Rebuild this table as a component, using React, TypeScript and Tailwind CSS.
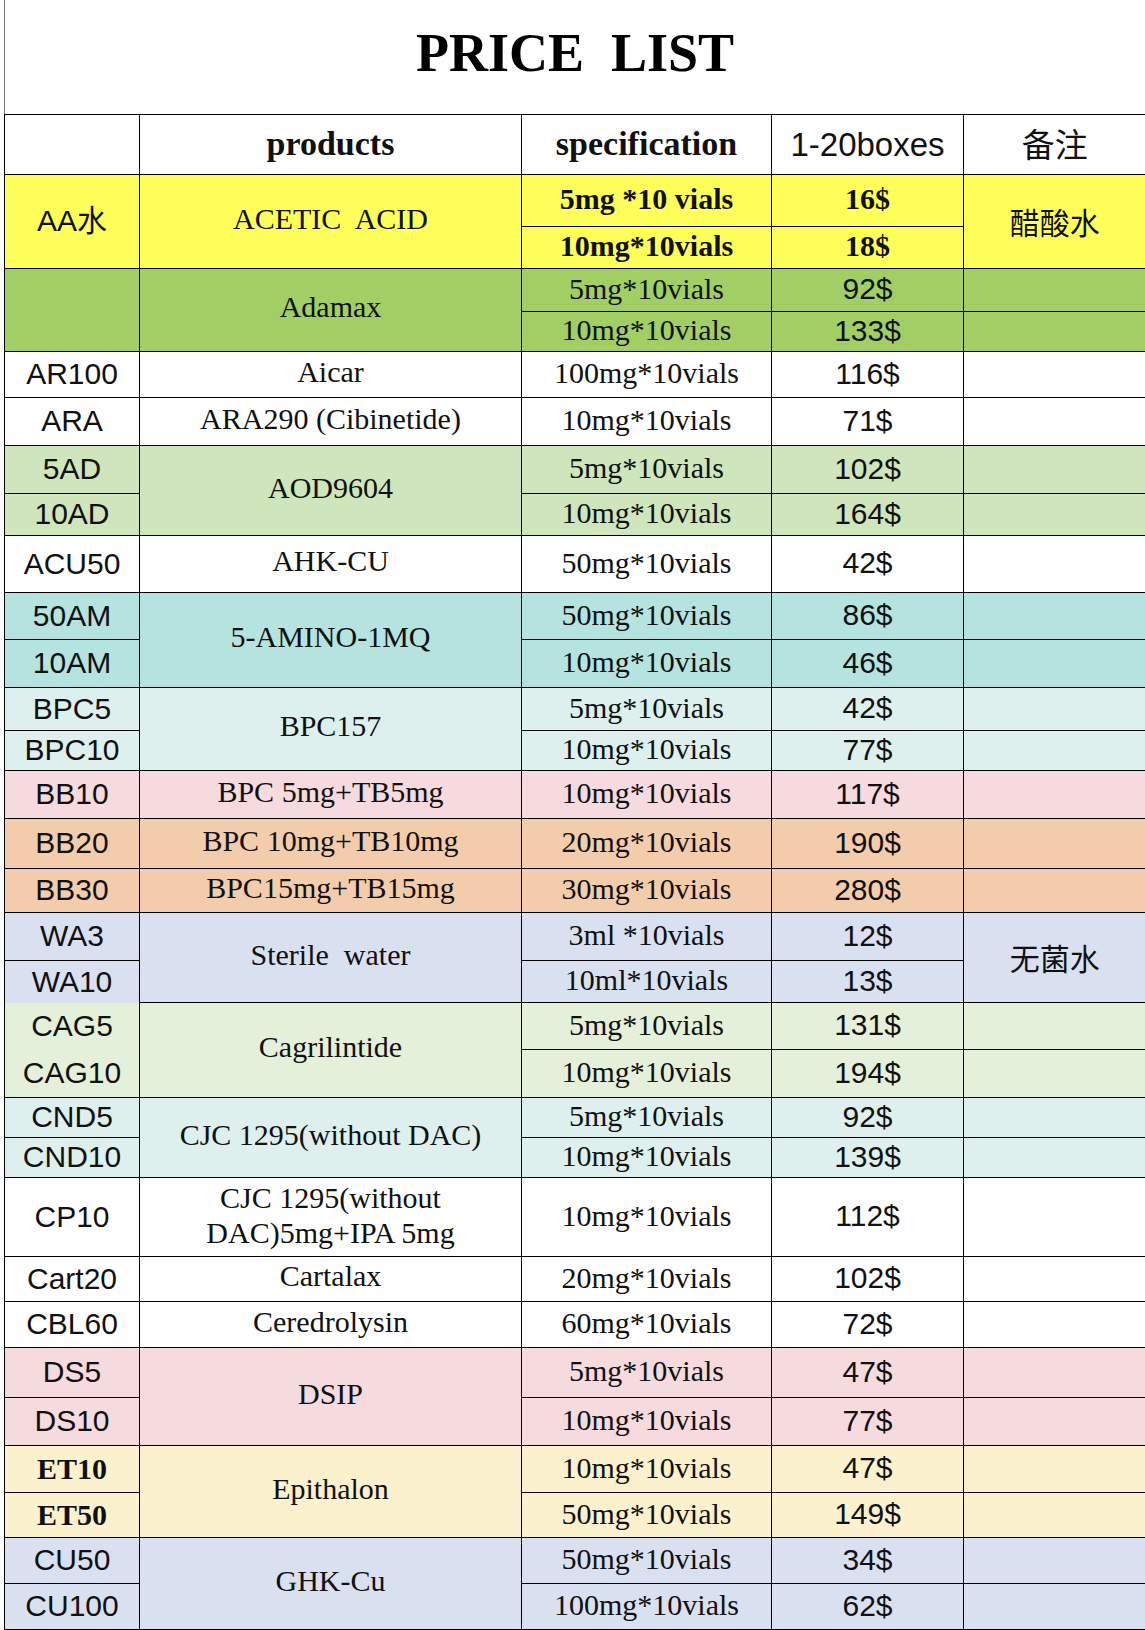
const serif = "font-['Liberation_Serif','Times_New_Roman',serif]";
const sans = "font-['Liberation_Sans','Noto_Sans_CJK_SC',sans-serif]";
const cjk = "font-['Noto_Sans_CJK_SC',sans-serif]";

type CellProps = {
  children?: React.ReactNode;
  className?: string;
  rowSpan?: number;
};

function Td({ children, className = "", rowSpan }: CellProps) {
  return (
    <td
      rowSpan={rowSpan}
      className={`border border-black p-0 text-center align-middle text-[30px] leading-[1.15] text-[#111] ${className}`}
    >
      {children}
    </td>
  );
}

// code column
function Code({ children, className = "", rowSpan }: CellProps) {
  return (
    <Td rowSpan={rowSpan} className={`${sans} ${className}`}>
      {children}
    </Td>
  );
}

function Name({ children, className = "", rowSpan }: CellProps) {
  return (
    <Td rowSpan={rowSpan} className={`${serif} pb-[5px] ${className}`}>
      {children}
    </Td>
  );
}

function Spec({ children, className = "" }: CellProps) {
  return <Td className={`${serif} pb-[2px] ${className}`}>{children}</Td>;
}

function Price({ children, className = "" }: CellProps) {
  return <Td className={`${sans} pb-[1px] ${className}`}>{children}</Td>;
}

function Note({ children, rowSpan }: CellProps) {
  return (
    <Td rowSpan={rowSpan} className={`${cjk} border-r-0`}>
      {children}
    </Td>
  );
}

export default function App() {
  return (
    <div className="w-[1145px] bg-white">
      <div className="ml-[4px] w-[1141px]">
        <div className="flex h-[114px] items-center justify-center border-l border-[#777] pb-[8px]">
          <h1 className={`${serif} whitespace-pre text-[54px] font-bold leading-none text-black`}>PRICE  LIST</h1>
        </div>
        <table className="w-[1141px] table-fixed border-collapse">
          <colgroup>
            <col className="w-[135px]" />
            <col className="w-[382px]" />
            <col className="w-[250px]" />
            <col className="w-[192px]" />
            <col className="w-[182px]" />
          </colgroup>
          <tbody>
            <tr className="h-[60px] bg-white">
              <Td />
              <Td className={`${serif} pb-[2px] text-[34px] font-bold`}>products</Td>
              <Td className={`${serif} pb-[2px] text-[34px] font-bold`}>specification</Td>
              <Td className={`${sans} text-[33px]`}>1-20boxes</Td>
              <Td className={`${cjk} border-r-0 pb-[2px] text-[33px]`}>备注</Td>
            </tr>

            <tr className="h-[52px] bg-[#ffff5c]">
              <Code rowSpan={2}>AA水</Code>
              <Name rowSpan={2} className="whitespace-pre">ACETIC  ACID</Name>
              <Spec className="font-bold">5mg *10 vials</Spec>
              <Spec className="font-bold">16$</Spec>
              <Note rowSpan={2}>醋酸水</Note>
            </tr>
            <tr className="h-[42px] bg-[#ffff5c]">
              <Spec className="font-bold">10mg*10vials</Spec>
              <Spec className="font-bold">18$</Spec>
            </tr>

            <tr className="h-[43px] bg-[#a1cf66]">
              <Code rowSpan={2} />
              <Name rowSpan={2}>Adamax</Name>
              <Spec>5mg*10vials</Spec>
              <Price>92$</Price>
              <Note />
            </tr>
            <tr className="h-[40px] bg-[#a1cf66]">
              <Spec>10mg*10vials</Spec>
              <Price>133$</Price>
              <Note />
            </tr>

            <tr className="h-[46px] bg-white">
              <Code>AR100</Code>
              <Name>Aicar</Name>
              <Spec>100mg*10vials</Spec>
              <Price>116$</Price>
              <Note />
            </tr>
            <tr className="h-[48px] bg-white">
              <Code>ARA</Code>
              <Name>ARA290 (Cibinetide)</Name>
              <Spec>10mg*10vials</Spec>
              <Price>71$</Price>
              <Note />
            </tr>

            <tr className="h-[48px] bg-[#cfe5bb]">
              <Code>5AD</Code>
              <Name rowSpan={2}>AOD9604</Name>
              <Spec>5mg*10vials</Spec>
              <Price>102$</Price>
              <Note />
            </tr>
            <tr className="h-[42px] bg-[#cfe5bb]">
              <Code>10AD</Code>
              <Spec>10mg*10vials</Spec>
              <Price>164$</Price>
              <Note />
            </tr>

            <tr className="h-[57px] bg-white">
              <Code>ACU50</Code>
              <Name>AHK-CU</Name>
              <Spec>50mg*10vials</Spec>
              <Price>42$</Price>
              <Note />
            </tr>

            <tr className="h-[47px] bg-[#b5e3df]">
              <Code>50AM</Code>
              <Name rowSpan={2}>5-AMINO-1MQ</Name>
              <Spec>50mg*10vials</Spec>
              <Price>86$</Price>
              <Note />
            </tr>
            <tr className="h-[48px] bg-[#b5e3df]">
              <Code>10AM</Code>
              <Spec>10mg*10vials</Spec>
              <Price>46$</Price>
              <Note />
            </tr>

            <tr className="h-[43px] bg-[#ddf0ed]">
              <Code>BPC5</Code>
              <Name rowSpan={2}>BPC157</Name>
              <Spec>5mg*10vials</Spec>
              <Price>42$</Price>
              <Note />
            </tr>
            <tr className="h-[40px] bg-[#ddf0ed]">
              <Code>BPC10</Code>
              <Spec>10mg*10vials</Spec>
              <Price>77$</Price>
              <Note />
            </tr>

            <tr className="h-[48px] bg-[#f5dade]">
              <Code>BB10</Code>
              <Name>BPC 5mg+TB5mg</Name>
              <Spec>10mg*10vials</Spec>
              <Price>117$</Price>
              <Note />
            </tr>
            <tr className="h-[50px] bg-[#f3cdab]">
              <Code>BB20</Code>
              <Name>BPC 10mg+TB10mg</Name>
              <Spec>20mg*10vials</Spec>
              <Price>190$</Price>
              <Note />
            </tr>
            <tr className="h-[44px] bg-[#f3cdab]">
              <Code>BB30</Code>
              <Name>BPC15mg+TB15mg</Name>
              <Spec>30mg*10vials</Spec>
              <Price>280$</Price>
              <Note />
            </tr>

            <tr className="h-[48px] bg-[#d9e0f0]">
              <Code>WA3</Code>
              <Name rowSpan={2} className="whitespace-pre">Sterile  water</Name>
              <Spec>3ml *10vials</Spec>
              <Price>12$</Price>
              <Note rowSpan={2}>无菌水</Note>
            </tr>
            <tr className="h-[42px] bg-[#d9e0f0]">
              <Code className="border-b-0">WA10</Code>
              <Spec>10ml*10vials</Spec>
              <Price>13$</Price>
            </tr>

            <tr className="h-[47px] bg-[#e4f0d9]">
              <Code className="border-t-0 border-b-0">CAG5</Code>
              <Name rowSpan={2}>Cagrilintide</Name>
              <Spec>5mg*10vials</Spec>
              <Price>131$</Price>
              <Note />
            </tr>
            <tr className="h-[48px] bg-[#e4f0d9]">
              <Code className="border-t-0">CAG10</Code>
              <Spec>10mg*10vials</Spec>
              <Price>194$</Price>
              <Note />
            </tr>

            <tr className="h-[40px] bg-[#ddf0ed]">
              <Code>CND5</Code>
              <Name rowSpan={2}>CJC 1295(without DAC)</Name>
              <Spec>5mg*10vials</Spec>
              <Price>92$</Price>
              <Note />
            </tr>
            <tr className="h-[40px] bg-[#ddf0ed]">
              <Code>CND10</Code>
              <Spec>10mg*10vials</Spec>
              <Price>139$</Price>
              <Note />
            </tr>

            <tr className="h-[79px] bg-white">
              <Code>CP10</Code>
              <Name className="leading-[35px]">
                CJC 1295(without
                <br />
                DAC)5mg+IPA 5mg
              </Name>
              <Spec>10mg*10vials</Spec>
              <Price>112$</Price>
              <Note />
            </tr>
            <tr className="h-[45px] bg-white">
              <Code>Cart20</Code>
              <Name>Cartalax</Name>
              <Spec>20mg*10vials</Spec>
              <Price>102$</Price>
              <Note />
            </tr>
            <tr className="h-[46px] bg-white">
              <Code>CBL60</Code>
              <Name>Ceredrolysin</Name>
              <Spec>60mg*10vials</Spec>
              <Price>72$</Price>
              <Note />
            </tr>

            <tr className="h-[50px] bg-[#f5dade]">
              <Code>DS5</Code>
              <Name rowSpan={2}>DSIP</Name>
              <Spec>5mg*10vials</Spec>
              <Price>47$</Price>
              <Note />
            </tr>
            <tr className="h-[48px] bg-[#f5dade]">
              <Code>DS10</Code>
              <Spec>10mg*10vials</Spec>
              <Price>77$</Price>
              <Note />
            </tr>

            <tr className="h-[47px] bg-[#fbf1cc]">
              <Td className={`${serif} font-bold`}>ET10</Td>
              <Name rowSpan={2}>Epithalon</Name>
              <Spec>10mg*10vials</Spec>
              <Price>47$</Price>
              <Note />
            </tr>
            <tr className="h-[45px] bg-[#fbf1cc]">
              <Td className={`${serif} font-bold`}>ET50</Td>
              <Spec>50mg*10vials</Spec>
              <Price>149$</Price>
              <Note />
            </tr>

            <tr className="h-[46px] bg-[#d9e0f0]">
              <Code>CU50</Code>
              <Name rowSpan={2}>GHK-Cu</Name>
              <Spec>50mg*10vials</Spec>
              <Price>34$</Price>
              <Note />
            </tr>
            <tr className="h-[46px] bg-[#d9e0f0]">
              <Code>CU100</Code>
              <Spec>100mg*10vials</Spec>
              <Price>62$</Price>
              <Note />
            </tr>
          </tbody>
        </table>
      </div>
    </div>
  );
}
